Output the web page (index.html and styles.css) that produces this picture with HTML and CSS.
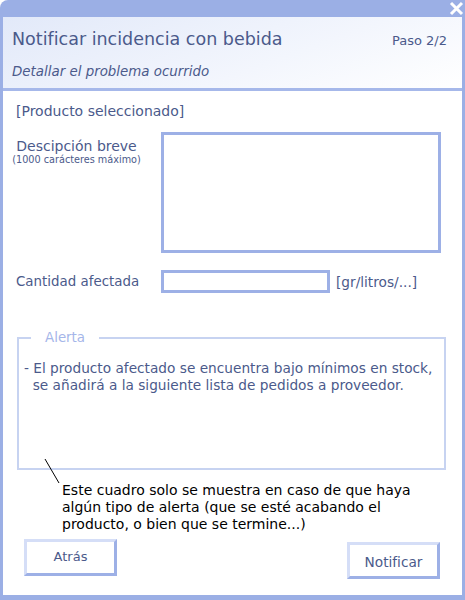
FILE: index.html
```html
<!DOCTYPE html>
<html lang="es">
<head>
    <meta charset="UTF-8">
    <title>Notificar incidencia con bebida</title>
    <link rel="stylesheet" href="styles.css">
</head>
<body>
    <div class="window">
        <div class="titlebar">
            <svg class="close" width="15" height="15" viewBox="0 0 15 15"><path d="M2 2 L13 13 M13 2 L2 13" stroke="#fff" stroke-width="3"/></svg>
        </div>
        <div class="header">
            <div class="header-row">
                <h1>Notificar incidencia con bebida</h1>
                <span class="step">Paso 2/2</span>
            </div>
            <div class="subtitle">Detallar el problema ocurrido</div>
        </div>

        <div class="content">
            <div class="product">[Producto seleccionado]</div>

            <div class="field-row">
                <div class="label-col center">
                    <div>Descipción breve</div>
                    <div class="hint">(1000 carácteres máximo)</div>
                </div>
                <textarea class="desc"></textarea>
            </div>

            <div class="field-row qty-row">
                <div class="label-col qty-label">Cantidad afectada</div>
                <input type="text" class="qty">
                <span class="unit">[gr/litros/...]</span>
            </div>

            <fieldset class="alert">
                <legend>Alerta</legend>
                <div class="alert-text">- El producto afectado se encuentra bajo mínimos en stock,<br>&nbsp; se añadirá a la siguiente lista de pedidos a proveedor.</div>
            </fieldset>

            <div class="note">
                <svg class="pointer" width="20" height="28" viewBox="0 0 20 28"><line x1="1" y1="1" x2="15" y2="25" stroke="#000" stroke-width="1"/></svg>
                <p>Este cuadro solo se muestra en caso de que haya<br>algún tipo de alerta (que se esté acabando el<br>producto, o bien que se termine...)</p>
            </div>

            <div class="actions">
                <button class="btn btn-back">Atrás</button>
                <button class="btn btn-notify">Notificar</button>
            </div>
        </div>
    </div>
</body>
</html>
```

FILE: styles.css
```css
body {
    margin: 0;
    font-family: "DejaVu Sans", Verdana, sans-serif;
    color: #4b5a8b;
}
.window {
    width: 465px;
    height: 600px;
    box-sizing: border-box;
    background-color: #9bafe5;
    padding: 0 3px 5px 3px;
    border-top-left-radius: 8px;
    display: flex;
    flex-direction: column;
}
.titlebar {
    height: 17px;
    position: relative;
}
.close {
    position: absolute;
    right: -2px;
    top: 1px;
}
.header {
    height: 74px;
    background: linear-gradient(160deg, #e2e9f9 0%, #f3f6fd 60%, #ffffff 100%);
    border-bottom: 3px solid #a6b8ea;
    padding: 0 15px 0 9px;
    box-sizing: border-box;
}
.header-row {
    display: flex;
    justify-content: space-between;
    align-items: baseline;
    padding-top: 11px;
}
h1 {
    margin: 0;
    font-size: 17.5px;
    font-weight: normal;
    line-height: 22px;
}
.step {
    font-size: 13px;
}
.subtitle {
    margin-top: 14px;
    font-size: 13.4px;
    font-style: italic;
}
.content {
    flex: 1;
    background-color: #fff;
    padding: 12px 13px 0 13px;
    font-size: 14px;
}
.product {
    line-height: 17px;
}
.field-row {
    display: flex;
    align-items: flex-start;
    margin-top: 12px;
}
.label-col {
    width: 145px;
    line-height: 16px;
}
.center {
    text-align: center;
    width: 129px;
    margin-left: -4px;
    margin-right: 20px;
    padding-top: 6px;
}
.hint {
    font-size: 9.7px;
    line-height: 12px;
}
textarea.desc {
    width: 280px;
    height: 121px;
    box-sizing: border-box;
    border: 3px solid #9db0e6;
    margin: 0;
    resize: none;
}
.qty-row {
    margin-top: 17px;
    align-items: center;
}
.qty-label {
    font-size: 13.4px;
}
input.qty {
    width: 169px;
    height: 23px;
    box-sizing: border-box;
    border: 3px solid #9db0e6;
    margin: 0 6px 0 0;
}
.unit {
    font-size: 13.7px;
}
.alert {
    margin: 37px 3px 0 1px;
    height: 140px;
    box-sizing: border-box;
    border: 2px solid #c7d3f1;
    padding: 15px 4px 0 5px;
}
.alert legend {
    color: #a5b6e9;
    padding: 0 14px;
    margin-left: 7px;
    font-size: 13.4px;
}
.alert-text {
    font-size: 13.7px;
    line-height: 17px;
}
.note {
    position: relative;
    padding: 12px 0 0 46px;
    color: #000;
}
.pointer {
    position: absolute;
    left: 28px;
    top: -12px;
}
.note p {
    margin: 0;
    line-height: 17px;
}
.actions {
    display: flex;
    justify-content: space-between;
    margin-top: 6px;
    padding: 0 9px 0 8px;
}
.btn {
    width: 93px;
    height: 37px;
    background-color: #fff;
    border-style: solid;
    border-width: 3px;
    border-color: #d5def7 #9db0e6 #9db0e6 #d5def7;
    font-family: "DejaVu Sans", Verdana, sans-serif;
    font-size: 13px;
    color: #4b5a8b;
    padding: 0 0 3px 0;
}
.btn-notify {
    margin-top: 3px;
    padding: 3px 0 0 0;
    font-size: 13.7px;
}
```
